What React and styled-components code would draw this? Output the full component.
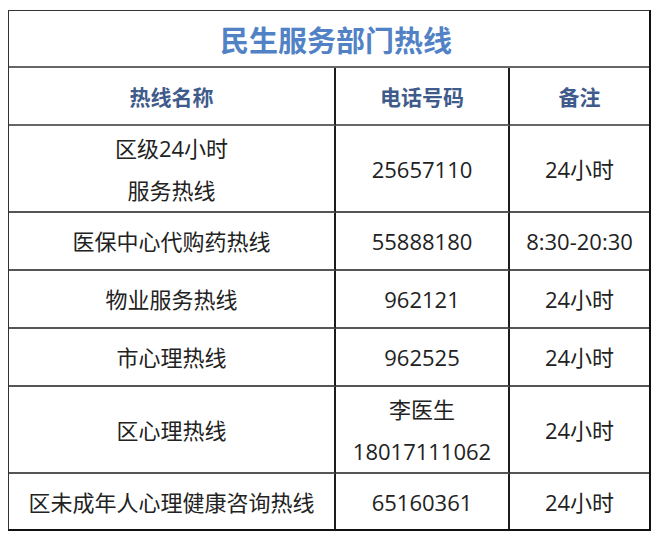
import styled, { createGlobalStyle } from 'styled-components'

const GlobalStyle = createGlobalStyle`
  body {
    margin: 0;
    background: #fff;
    font-family: 'Open Sans', 'Noto Sans CJK SC', sans-serif;
    color: #222;
  }
`

const rows = [
  { name: ['区级24小时', '服务热线'], phone: ['25657110'], note: '24小时', tall: true },
  { name: ['医保中心代购药热线'], phone: ['55888180'], note: '8:30-20:30' },
  { name: ['物业服务热线'], phone: ['962121'], note: '24小时' },
  { name: ['市心理热线'], phone: ['962525'], note: '24小时' },
  { name: ['区心理热线'], phone: ['李医生', '18017111062'], note: '24小时', tall: true },
  { name: ['区未成年人心理健康咨询热线'], phone: ['65160361'], note: '24小时', last: true },
]

const Sheet = () => {
  return (
    <>
      <GlobalStyle />
      <Frame>
        <Title>民生服务部门热线</Title>
        <Head>热线名称</Head>
        <Head>电话号码</Head>
        <Head $end>备注</Head>
        {rows.map((r, i) => (
          <Row key={i} $tall={r.tall} $last={r.last}>
            <Cell>
              {r.name.map((t) => (
                <Line key={t}>{t}</Line>
              ))}
            </Cell>
            <Cell>
              {r.phone.map((t) => (
                <Line key={t}>{t}</Line>
              ))}
            </Cell>
            <Cell $end>
              <Line>{r.note}</Line>
            </Cell>
          </Row>
        ))}
      </Frame>
    </>
  )
}

const Frame = styled.section`
  box-sizing: border-box;
  width: 643px;
  margin: 10px 0 0 8px;
  border-left: 1px solid #333;
  border-top: 1px solid #333;
  border-right: 2px solid #111;
  border-bottom: 2px solid #111;
  display: grid;
  grid-template-columns: 327px 174px 1fr;
`

const Title = styled.div`
  grid-column: 1 / -1;
  box-sizing: border-box;
  height: 57px;
  padding-left: 14px;
  border-bottom: 2px solid #666;
  display: flex;
  align-items: center;
  justify-content: center;
  font-family: 'Noto Sans CJK SC', sans-serif;
  font-weight: 700;
  font-size: 29px;
  color: #5282c6;
`

const Head = styled.div`
  box-sizing: border-box;
  height: 58px;
  border-bottom: 2px solid #666;
  border-right: ${(p) => (p.$end ? 'none' : '2px solid #1c1c1c')};
  display: flex;
  align-items: center;
  justify-content: center;
  font-family: 'Noto Sans CJK SC', sans-serif;
  font-weight: 700;
  font-size: 21px;
  color: #3f5b8b;
`

const Row = styled.div`
  display: contents;
  & > div {
    height: ${(p) => (p.$tall ? '87px' : p.$last ? '55px' : '58px')};
    border-bottom: ${(p) => (p.$last ? 'none' : '2px solid #555')};
  }
`

const Cell = styled.div`
  box-sizing: border-box;
  border-right: ${(p) => (p.$end ? 'none' : '2px solid #1c1c1c')};
  display: flex;
  flex-direction: column;
  align-items: center;
  justify-content: center;
  font-size: 22px;
  color: #222;
`

const Line = styled.div`
  line-height: 42px;
  white-space: nowrap;
`

export default Sheet
